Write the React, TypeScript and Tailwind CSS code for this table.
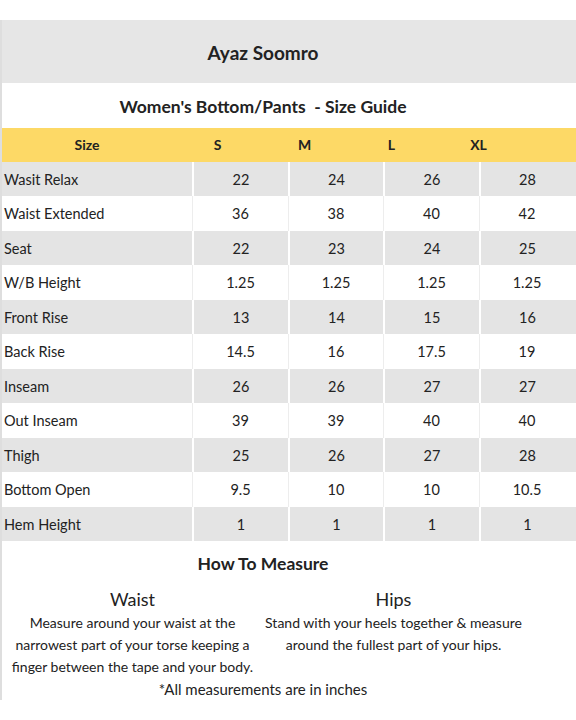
import React from "react";

const rows: [string, string, string, string, string][] = [
  ["Wasit Relax", "22", "24", "26", "28"],
  ["Waist Extended", "36", "38", "40", "42"],
  ["Seat", "22", "23", "24", "25"],
  ["W/B Height", "1.25", "1.25", "1.25", "1.25"],
  ["Front Rise", "13", "14", "15", "16"],
  ["Back Rise", "14.5", "16", "17.5", "19"],
  ["Inseam", "26", "26", "27", "27"],
  ["Out Inseam", "39", "39", "40", "40"],
  ["Thigh", "25", "26", "27", "28"],
  ["Bottom Open", "9.5", "10", "10", "10.5"],
  ["Hem Height", "1", "1", "1", "1"],
];

const valueWidths = ["w-[96px]", "w-[95px]", "w-[96px]", "w-[95px]"];

export default function App() {
  return (
    <div
      className="w-[576px] h-[720px] bg-white pt-[20px] text-[#222222]"
      style={{ fontFamily: "Lato, 'Open Sans', sans-serif" }}
    >
      <div className="h-[680px] border-l-2 border-[#dedede] flex flex-col">
        {/* Title band */}
        <div className="h-[63px] bg-[#e6e6e6] flex items-center">
          <div className="w-[522px] text-center text-[19px] font-bold leading-none pt-[2px]">
            Ayaz Soomro
          </div>
        </div>
        {/* Subtitle */}
        <div className="h-[45px] bg-white flex items-center">
          <div className="w-[522px] text-center text-[17.5px] font-bold leading-none pt-[3px] whitespace-pre">
            {"Women's Bottom/Pants  - Size Guide"}
          </div>
        </div>
        {/* Yellow header */}
        <div className="h-[34px] bg-[#fdd966] flex items-center text-[14px] font-bold">
          <div className="w-[172px] text-center pr-[2px]">Size</div>
          <div className="w-[87px] text-center">S</div>
          <div className="w-[87px] text-center">M</div>
          <div className="w-[87px] text-center">L</div>
          <div className="w-[87px] text-center">XL</div>
        </div>
        {/* Body rows */}
        {rows.map((r, i) => {
          const gray = i % 2 === 0;
          return (
            <div
              key={r[0]}
              className={`h-[34.64px] flex text-[14.5px] ${gray ? "bg-[#e4e4e4]" : "bg-white"}`}
            >
              <div className="w-[190px] flex items-center pl-[2px] pt-[2px]">{r[0]}</div>
              {r.slice(1).map((v, j) => (
                <div
                  key={j}
                  className={`${valueWidths[j]} flex items-center justify-center pt-[2px] ${
                    gray ? "border-l-2 border-white" : "border-l border-[#ededed]"
                  }`}
                >
                  {v}
                </div>
              ))}
            </div>
          );
        })}
        {/* How to measure */}
        <div className="w-[522px] mt-[10px] text-center text-[17.5px] font-bold leading-[26px]">
          How To Measure
        </div>
        <div className="w-[522px] mt-[9px] flex">
          <div className="w-[261px] text-center whitespace-nowrap">
            <div className="text-[18px] leading-[26px]">Waist</div>
            <div className="text-[14px] leading-[22px]">
              Measure around your waist at the
              <br />
              narrowest part of your torse keeping a
              <br />
              finger between the tape and your body.
            </div>
          </div>
          <div className="w-[261px] text-center whitespace-nowrap">
            <div className="text-[18px] leading-[26px]">Hips</div>
            <div className="text-[14px] leading-[22px]">
              Stand with your heels together &amp; measure
              <br />
              around the fullest part of your hips.
            </div>
          </div>
        </div>
        <div className="w-[522px] text-center text-[15px] leading-[22px]">
          *All measurements are in inches
        </div>
      </div>
    </div>
  );
}
